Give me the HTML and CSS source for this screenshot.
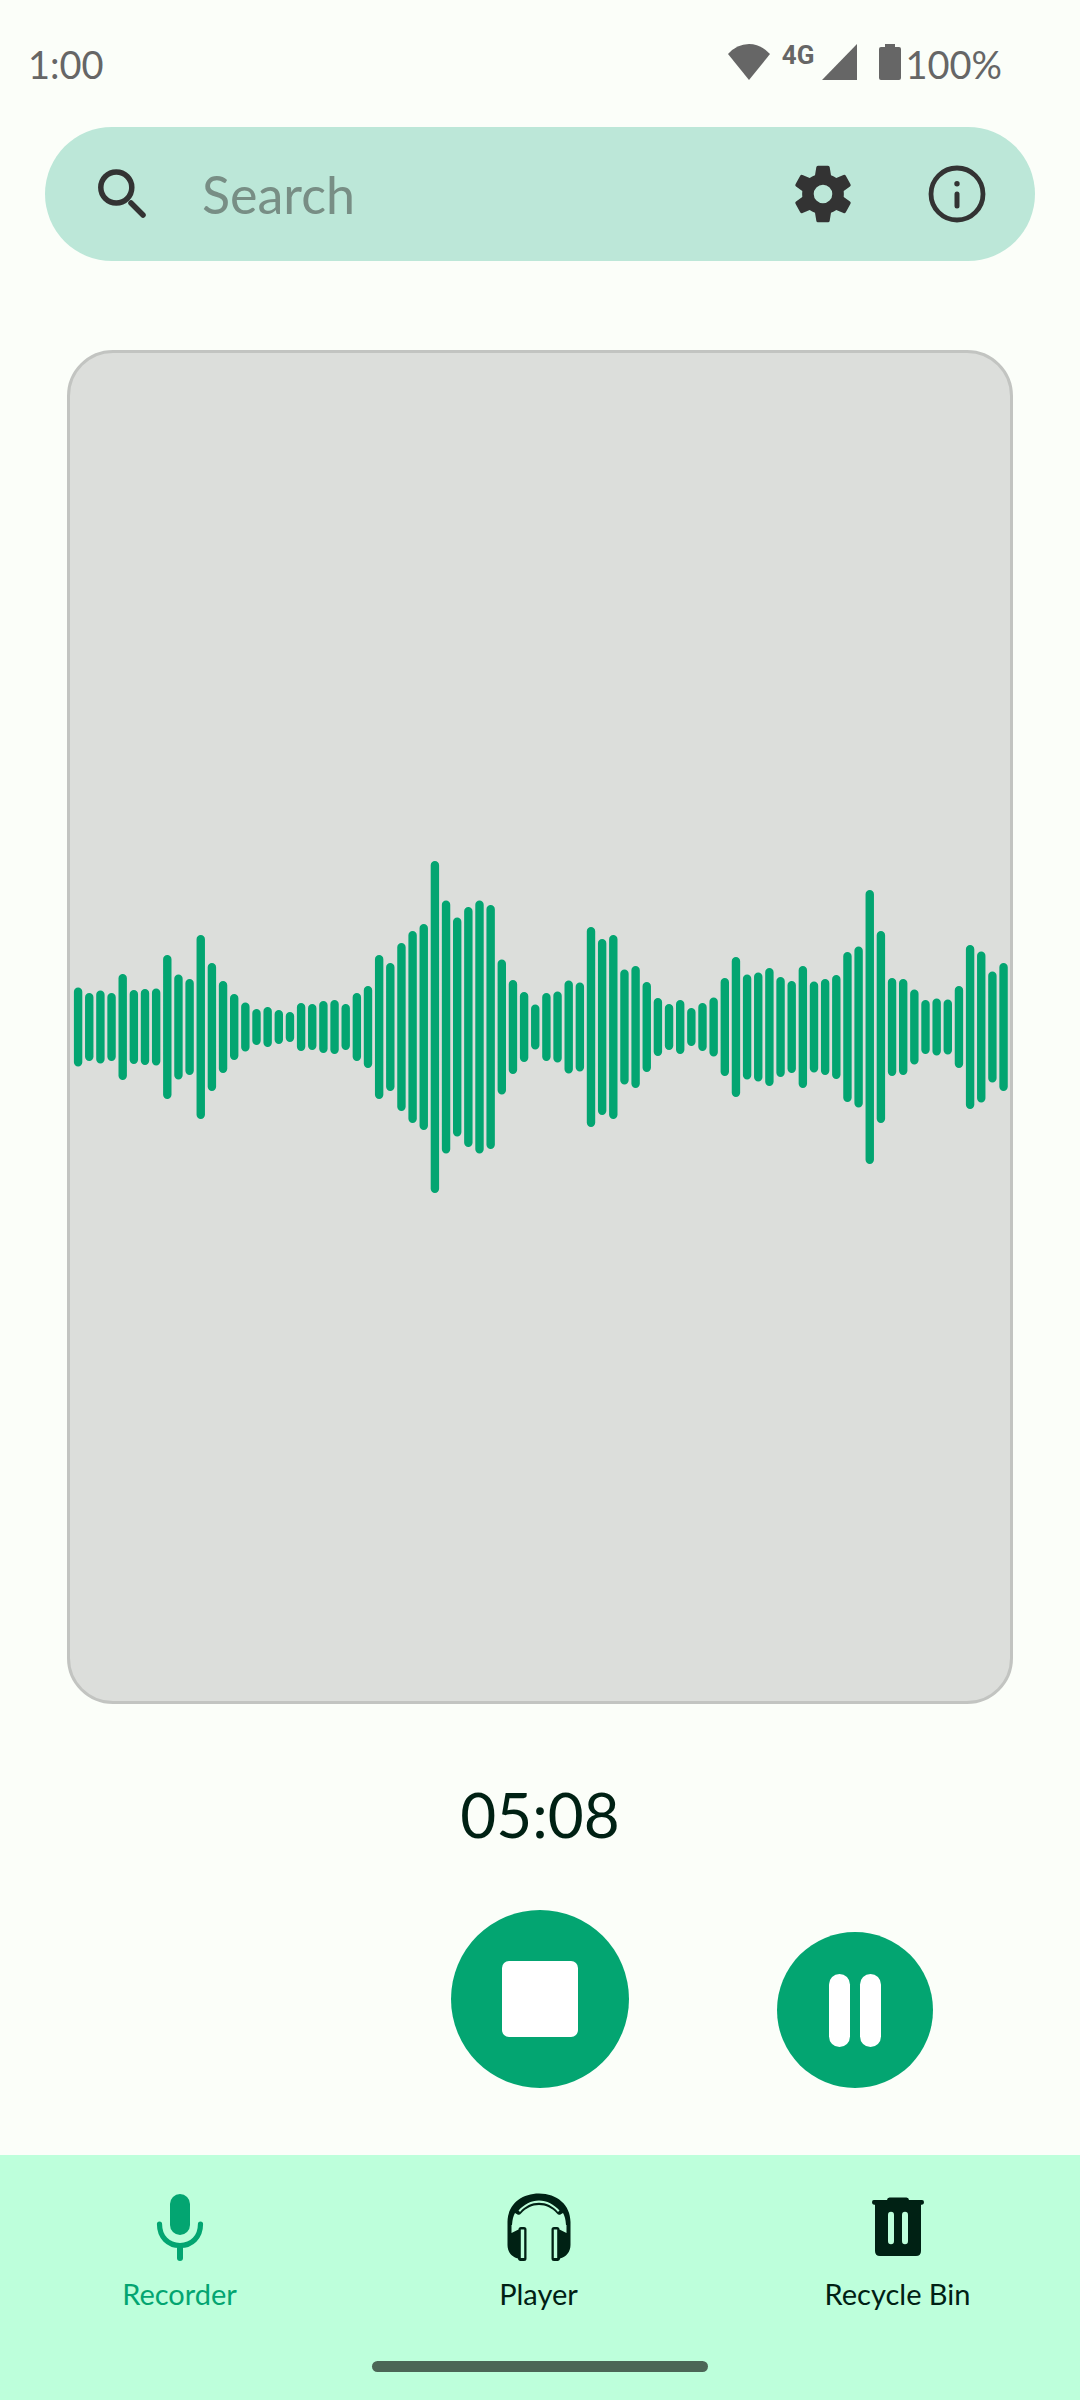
FILE: index.html
```html
<!DOCTYPE html>
<html lang="en">
<head>
<meta charset="utf-8">
<meta name="viewport" content="width=device-width, initial-scale=1">
<title>Recorder</title>
<link rel="stylesheet" href="styles.css">
</head>
<body>
<div class="app">
  <header class="status">
    <span class="status-time">1:00</span>
    <div class="status-icons">
      <svg class="wifi" viewBox="0 0 42 36" aria-hidden="true"><path d="M21 36 0 10Q9 0 21 0T42 10Z"/></svg>
      <span class="network">4G</span>
      <svg class="signal" viewBox="0 0 35 36" aria-hidden="true"><path d="M0 36 35 0V36Z"/></svg>
      <svg class="battery" viewBox="0 0 22 36" aria-hidden="true"><path d="M6 0H16V3H20Q22 3 22 5V34Q22 36 20 36H2Q0 36 0 34V5Q0 3 2 3H6Z"/></svg>
      <span class="status-level">100%</span>
    </div>
  </header>

  <form class="search" role="search">
    <label class="search-label" for="q" aria-label="Search">
      <svg class="icon-search" viewBox="0 0 48 49" aria-hidden="true"><circle cx="18.300" cy="18.500" r="15.500"/><path d="M33 34 45 46"/></svg>
    </label>
    <input class="search-input" id="q" type="text" placeholder="Search">
    <button class="icon-button" type="button" aria-label="Settings">
      <svg class="icon-tool" viewBox="0 0 58 58" aria-hidden="true"><path fill-rule="evenodd" d="M24 .7H34Q35.500 .7 35.700 2.200L37 10.200Q40 11.400 42.300 13.100L49.500 10Q51 9.400 51.800 10.800L56.500 19.200Q57.200 20.600 56 21.500L49.700 26Q50 29 49.700 32L56 36.500Q57.200 37.400 56.500 38.800L51.800 47.200Q51 48.600 49.500 48L42.300 44.900Q40 46.600 37 47.800L35.700 55.800Q35.500 57.300 34 57.300H24Q22.500 57.300 22.300 55.800L21 47.800Q18 46.600 15.700 44.900L8.500 48Q7 48.600 6.200 47.200L1.500 38.800Q.8 37.400 2 36.500L8.300 32Q8 29 8.300 26L2 21.500Q.8 20.600 1.500 19.200L6.200 10.800Q7 9.400 8.500 10L15.700 13.100Q18 11.400 21 10.200L22.300 2.200Q22.500 .7 24 .7ZM29 19.700A9.300 9.300 0 1 0 29 38.300 9.300 9.300 0 1 0 29 19.700Z"/></svg>
    </button>
    <button class="icon-button" type="button" aria-label="About">
      <svg class="icon-tool" viewBox="0 0 58 58" aria-hidden="true"><circle cx="29" cy="29" r="26" fill="none" stroke="currentColor" stroke-width="4.800"/><circle cx="29" cy="18.700" r="2.700"/><path d="M29 29V41" fill="none" stroke="currentColor" stroke-width="5" stroke-linecap="round"/></svg>
    </button>
  </form>

  <main class="recorder">
    <section class="visualizer" aria-label="Waveform">
      <svg class="wave" viewBox="0 0 940 340" role="img" aria-label="Audio level"><path id="wave"/></svg>
    </section>
    <time class="timer">05:08</time>
    <div class="controls">
      <button class="round stop" type="button" aria-label="Stop">
        <svg class="icon-stop" viewBox="0 0 76 76" aria-hidden="true"><rect width="76" height="76" rx="7"/></svg>
      </button>
      <button class="round pause" type="button" aria-label="Pause">
        <svg class="icon-pause" viewBox="0 0 52 73" aria-hidden="true"><rect width="21" height="73" rx="10.500"/><rect x="31" width="21" height="73" rx="10.500"/></svg>
      </button>
    </div>
  </main>

  <nav class="nav">
    <div class="tabs">
      <a class="tab active" href="#recorder" aria-current="page">
        <svg class="tab-icon" viewBox="0 0 72 72" aria-hidden="true"><rect x="26" y="2" width="20" height="41" rx="10"/><path d="M15.500 32C15.500 45 24 53.500 36 53.500S56.500 45 56.500 32" fill="none" stroke="currentColor" stroke-width="5.200" stroke-linecap="round"/><path d="M36 54V66" fill="none" stroke="currentColor" stroke-width="6" stroke-linecap="round"/></svg>
        <span>Recorder</span>
      </a>
      <a class="tab" href="#player">
        <svg class="tab-icon" viewBox="0 0 72 72" aria-hidden="true"><path d="M4.500 53V30C4.500 13 18 1.500 36 1.500S67.500 13 67.500 30V53C67.500 60 63 65 57 66.500 57 68 56 69 54.500 69H51Q48.500 69 48.500 66.500V37.500Q48.500 35 51 35H54Q56.500 35 56.500 37.500L63.500 41V33H63Q62.500 25 60 21L57.500 22.500Q55.500 23.500 54 21.500C49 16 43 13 36 13S23 16 18 21.500Q16.500 23.500 14.500 22.500L12 21Q9.500 25 9 33H8.500V41L15.500 37.500Q15.500 35 18 35H21Q23.500 35 23.500 37.500V66.500Q23.500 69 21 69H17.500C16 69 15 68 15 66.500 9 65 4.500 60 4.500 53Z"/><g class="cutout"><path d="M17.800 37.500H21.200V66H17.800ZM50.800 37.500H54.200V66H50.800Z"/><path d="M15.500 18.500C21 12.500 28 8.500 36 8.500S51 12.500 56.500 18.500L55 20C50 14 43 10.800 36 10.800S22 14 17 20Z"/></g></svg>
        <span>Player</span>
      </a>
      <a class="tab" href="#bin">
        <svg class="tab-icon" viewBox="0 0 72 72" aria-hidden="true"><path fill-rule="evenodd" d="M27.500 5.500H44.500Q46.800 5.500 47 8H60Q62 8 62 10.300T60 12.700H59V59Q59 64 54 64H18Q13 64 13 59V12.700H12Q10 12.700 10 10.300T12 8H25Q25.200 5.500 27.500 5.500ZM29 19.700Q26 19.700 26 23V49Q26 52.300 29 52.300T32 49V23Q32 19.700 29 19.700ZM43 19.700Q40 19.700 40 23V49Q40 52.300 43 52.300T46 49V23Q46 19.700 43 19.700Z"/></svg>
        <span>Recycle Bin</span>
      </a>
    </div>
    <div class="home-bar"></div>
  </nav>
</div>
<script src="wave.js"></script>
</body>
</html>
```

FILE: styles.css
```css
* { box-sizing: border-box; }

body {
  margin: 0;
  background: #fbfef9;
  color: #002114;
  font-family: Lato, "Open Sans", sans-serif;
}

.app {
  display: flex;
  flex-direction: column;
  min-height: 100vh;
}

svg { display: block; fill: currentColor; flex: none; }
button { border: 0; padding: 0; font: inherit; cursor: pointer; }

.status {
  display: flex;
  justify-content: space-between;
  padding: 40px 78px 0 28px;
  height: 127px;
  color: #666;
  font-size: 38px;
  line-height: 48px;
}
.status-icons { display: flex; align-items: flex-start; }
.status-icons svg { height: 36px; margin-top: 4px; }
.wifi { width: 42px; }
.network {
  margin: 0 8px 0 12px;
  font-family: Roboto, sans-serif;
  font-size: 26px;
  font-weight: 700;
  line-height: 30px;
}
.signal { width: 35px; }
.battery { width: 22px; margin-left: 22px; }
.status-level { margin-left: 4px; }

.search {
  display: flex;
  align-items: center;
  height: 134px;
  margin: 0 45px;
  padding: 0 33px 0 53px;
  border-radius: 67px;
  background: #bce7d8;
  color: #333;
}
.icon-search { width: 48px; margin-bottom: 2px; fill: none; stroke: currentColor; stroke-width: 5.5; stroke-linecap: round; }
.search-input {
  flex: 1;
  min-width: 0;
  margin-left: 56px;
  padding: 0;
  border: 0;
  outline: 0;
  background: none;
  color: inherit;
  font: inherit;
  font-size: 52px;
  line-height: 64px;
}
.search-input::placeholder { color: #788e85; opacity: 1; }
.icon-button {
  display: grid;
  place-items: center;
  width: 90px;
  height: 90px;
  margin-left: 44px;
  background: none;
  color: inherit;
}
.icon-tool { width: 58px; }

.recorder { display: flex; flex: 1; flex-direction: column; }
.visualizer {
  display: grid;
  flex: 1;
  align-items: center;
  margin: 89px 67px 0;
  border: 3px solid #c2c4c1;
  border-radius: 46px;
  background: #dcdedb;
}
.wave { width: 100%; fill: none; stroke: #03a571; stroke-width: 8.4; stroke-linecap: round; }
.timer {
  margin-top: 74px;
  font-size: 62px;
  line-height: 72px;
  text-align: center;
}
.controls {
  display: grid;
  grid-template-columns: 1fr auto 1fr;
  align-items: end;
  padding: 60px 0 67px;
}
.round {
  display: grid;
  place-items: center;
  border-radius: 50%;
  background: #03a571;
  color: #fff;
}
.stop { grid-column: 2; width: 178px; height: 178px; }
.pause { justify-self: center; width: 156px; height: 156px; }
.icon-stop { width: 76px; }
.icon-pause { width: 52px; }

.nav { padding: 37px 0 28px; background: #bdffdb; }
.tabs { display: grid; grid-template-columns: repeat(3, 1fr); padding-right: 3px; }
.tab {
  display: flex;
  flex-direction: column;
  align-items: center;
  gap: 12px;
  color: inherit;
  font-size: 29px;
  line-height: 36px;
  text-decoration: none;
}
.tab.active { color: #03a571; }
.tab-icon { width: 72px; }
.cutout { fill: #bdffdb; }
.home-bar {
  width: 336px;
  height: 11px;
  margin: 49px auto 0;
  border-radius: 6px;
  background: #4c6656;
}
```

FILE: wave.js
```js
// Height of each bar, oldest sample first.
const levels = [
  79, 68, 73, 68, 106, 74, 76, 77, 144, 105, 96, 184, 128, 92, 66, 49, 36, 40, 34, 30,
  48, 46, 52, 54, 46, 68, 82, 144, 128, 168, 192, 206, 332, 253, 219, 240, 253, 244, 135, 94,
  70, 45, 68, 71, 93, 89, 200, 176, 184, 115, 122, 90, 58, 46, 54, 38, 48, 59, 98, 140,
  105, 109, 118, 100, 92, 122, 91, 96, 104, 150, 161, 274, 192, 98, 96, 75, 54, 57, 55, 82,
  164, 151, 111, 128
];
const pitch = 11.15;
const cap = 4.2;
document.getElementById("wave").setAttribute("d", levels.map((h, i) => {
  const half = h / 2 - cap;
  return `M${8.1 + i * pitch} ${170 - half}v${half * 2}`;
}).join(""));
```
